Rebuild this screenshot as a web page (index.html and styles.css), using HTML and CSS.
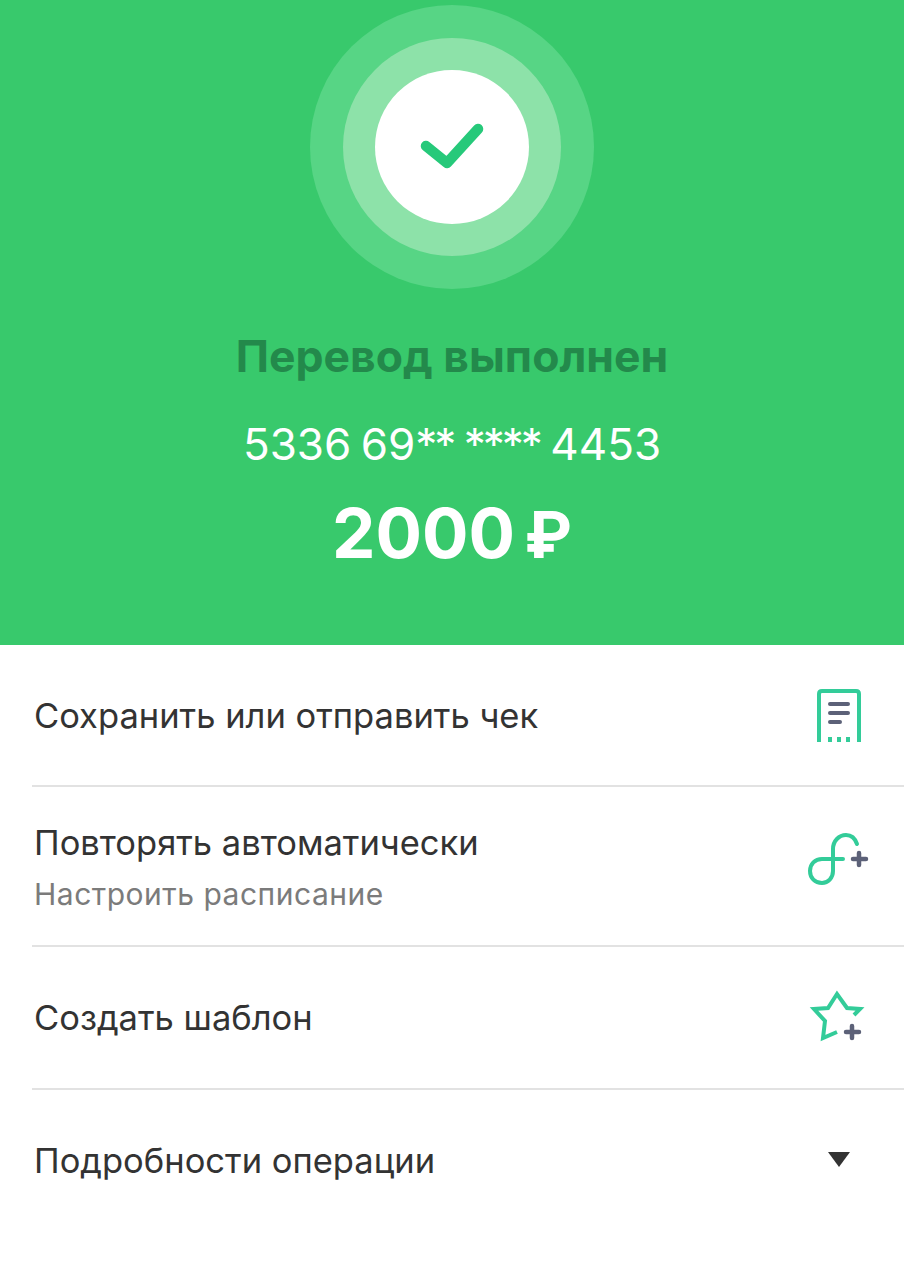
FILE: index.html
```html
<!DOCTYPE html>
<html lang="ru">
<head>
    <meta charset="UTF-8">
    <meta name="viewport" content="width=device-width, initial-scale=1.0">
    <title>Перевод выполнен</title>
    <link rel="stylesheet" href="styles.css">
</head>
<body>

    <header class="hero">
        <div class="ring-outer">
            <div class="ring-middle">
                <div class="ring-inner">
                    <svg class="check" viewBox="0 0 70 50" width="70" height="50">
                        <path d="M9 24 L30 41 L61 7" fill="none" stroke="#26c97a" stroke-width="10.5" stroke-linecap="round" stroke-linejoin="round"/>
                    </svg>
                </div>
            </div>
        </div>
        <h1 class="hero-title">Перевод выполнен</h1>
        <p class="hero-card">5336 69<span class="mask">**</span> <span class="mask">****</span> 4453</p>
        <p class="hero-sum">2000 <span class="currency">₽</span></p>
    </header>

    <ul class="actions">
        <li class="action action-first">
            <div class="action-text">
                <span class="action-name">Сохранить или отправить чек</span>
            </div>
            <svg class="action-icon" viewBox="0 0 64 64">
                <path d="M11 58 V10 Q11 7 14 7 H48 Q51 7 51 10 V58" fill="none" stroke="#33cc99" stroke-width="4"/>
                <path d="M22 20 H40 M22 29 H40 M22 38 H32" fill="none" stroke="#5c6178" stroke-width="4" stroke-linecap="round"/>
                <path d="M20 53 h4 v5 h-4z M29 53 h4 v5 h-4z M38 53 h4 v5 h-4z" fill="#33cc99"/>
            </svg>
        </li>
        <li class="action action-second">
            <div class="action-text">
                <span class="action-name">Повторять автоматически</span>
                <span class="action-sub">Настроить расписание</span>
            </div>
            <svg class="action-icon" viewBox="0 0 64 64">
                <path d="M49 9 C47 3 43 0 38 0 C31 0 25 6 25 14 V36 C25 43 20 48 14 48 C7 48 2 43 2 36 C2 29 7 24 14 24 H35" fill="none" stroke="#33cc99" stroke-width="4" stroke-linecap="round"/>
                <path d="M51 18 V30 M45 24 H58" fill="none" stroke="#5c6178" stroke-width="4.5" stroke-linecap="round"/>
            </svg>
        </li>
        <li class="action action-third">
            <div class="action-text">
                <span class="action-name">Создать шаблон</span>
            </div>
            <svg class="action-icon" viewBox="0 0 64 64">
                <path d="M46 29 L52 23 L39 22 L29 8 L20 22 L6 23 L17 35 L15 52 L29 46" fill="none" stroke="#33cc99" stroke-width="4"/>
                <path d="M44 40 V52 M38 46 H51" fill="none" stroke="#5c6178" stroke-width="4.5" stroke-linecap="round"/>
            </svg>
        </li>
        <li class="action action-last">
            <div class="action-text">
                <span class="action-name">Подробности операции</span>
            </div>
            <svg class="action-icon" viewBox="0 0 64 64">
                <path d="M20 23 H42 L31 38 Z" fill="#333333"/>
            </svg>
        </li>
    </ul>

</body>
</html>
```
FILE: styles.css
```css
body {
    font-family: Inter, "Noto Sans", sans-serif;
    background-color: #ffffff;
    margin: 0;
    padding: 0;
}

.hero {
    background-color: #38c96c;
    height: 645px;
    padding-top: 5px;
    box-sizing: border-box;
    display: flex;
    flex-direction: column;
    align-items: center;
}

.ring-outer,
.ring-middle,
.ring-inner {
    border-radius: 50%;
    display: flex;
    align-items: center;
    justify-content: center;
}

.ring-outer {
    width: 284px;
    height: 284px;
    background-color: #57d585;
}

.ring-middle {
    width: 218px;
    height: 218px;
    background-color: #8de2a9;
}

.ring-inner {
    width: 154px;
    height: 154px;
    background-color: #ffffff;
}

.hero-title {
    font-size: 44.5px;
    line-height: 54px;
    font-weight: 700;
    color: #23894b;
    margin: 40px 0 0;
}

.hero-card {
    font-size: 44px;
    line-height: 54px;
    word-spacing: -3px;
    color: #ffffff;
    margin: 34px 0 0;
}

.mask {
    letter-spacing: -3px;
    margin-right: 1px;
}

.hero-sum {
    font-size: 69px;
    line-height: 80px;
    font-weight: 700;
    word-spacing: -7px;
    color: #ffffff;
    margin: 22px 0 0;
}

.currency {
    font-size: 64px;
}

.actions {
    list-style: none;
    margin: 0;
    padding: 0 0 0 32px;
}

.action {
    display: flex;
    align-items: center;
    justify-content: space-between;
    padding-right: 32px;
    border-bottom: 2px solid #e2e2e2;
    box-sizing: border-box;
}

.action-first {
    height: 142px;
    padding-top: 2px;
}

.action-second {
    height: 160px;
    padding-top: 2px;
}

.action-third {
    height: 143px;
}

.action-last {
    height: 141px;
    border-bottom: none;
}

.action-text {
    display: flex;
    flex-direction: column;
    padding-left: 2px;
}

.action-name {
    font-size: 34.5px;
    line-height: 42px;
    color: #333333;
}

.action-sub {
    font-size: 30px;
    line-height: 36px;
    letter-spacing: 0.5px;
    color: #7b7b7b;
    margin-top: 12px;
}

.action-icon {
    width: 64px;
    height: 64px;
    flex-shrink: 0;
    overflow: visible;
}
```
